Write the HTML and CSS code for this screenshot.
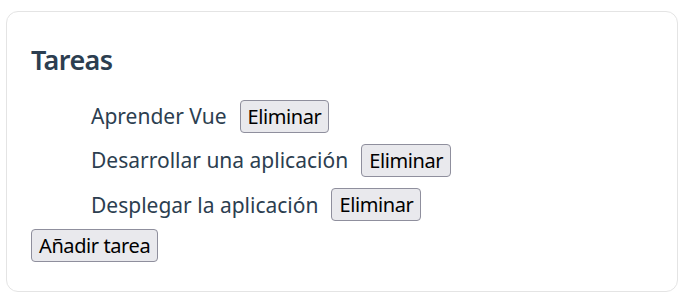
FILE: index.html
```html
<!DOCTYPE html>
<html lang="es">
<head>
<meta charset="utf-8">
<title>Tareas</title>
<link rel="stylesheet" href="styles.css">
</head>
<body>
<div class="card">
  <h2 class="title">Tareas</h2>
  <ul class="tasks">
    <li class="task"><span class="task-name">Aprender Vue</span><button class="btn">Eliminar</button></li>
    <li class="task"><span class="task-name">Desarrollar una aplicación</span><button class="btn">Eliminar</button></li>
    <li class="task"><span class="task-name">Desplegar la aplicación</span><button class="btn">Eliminar</button></li>
  </ul>
  <button class="btn">Añadir tarea</button>
</div>
</body>
</html>
```

FILE: styles.css
```css
html, body {
  margin: 0;
  padding: 0;
  background: #ffffff;
}
body {
  font-family: "Noto Sans", "Open Sans", sans-serif;
  color: #2c3e50;
}
.card {
  margin: 11px 10px 0 6px;
  box-sizing: border-box;
  width: 672px;
  height: 281px;
  border: 1px solid #e4e4e4;
  border-radius: 12px;
  padding: 28px 0 0 24px;
}
.title {
  margin: 0 0 14px 0;
  font-size: 27px;
  line-height: 40px;
  font-weight: 600;
  letter-spacing: -0.6px;
}
.tasks {
  list-style: none;
  margin: 0 0 2px 0;
  padding: 0 0 0 60px;
}
.task {
  display: flex;
  align-items: center;
  gap: 13px;
  padding: 5.65px 0;
  font-size: 21px;
}
.btn {
  box-sizing: border-box;
  height: 33px;
  padding: 0 7px;
  font-family: "Noto Sans", "Open Sans", sans-serif;
  font-size: 20px;
  letter-spacing: -0.4px;
  color: #000;
  background: #e9e9ed;
  border: 1px solid #8f8f9d;
  border-radius: 4px;
  line-height: 31px;
}
```
